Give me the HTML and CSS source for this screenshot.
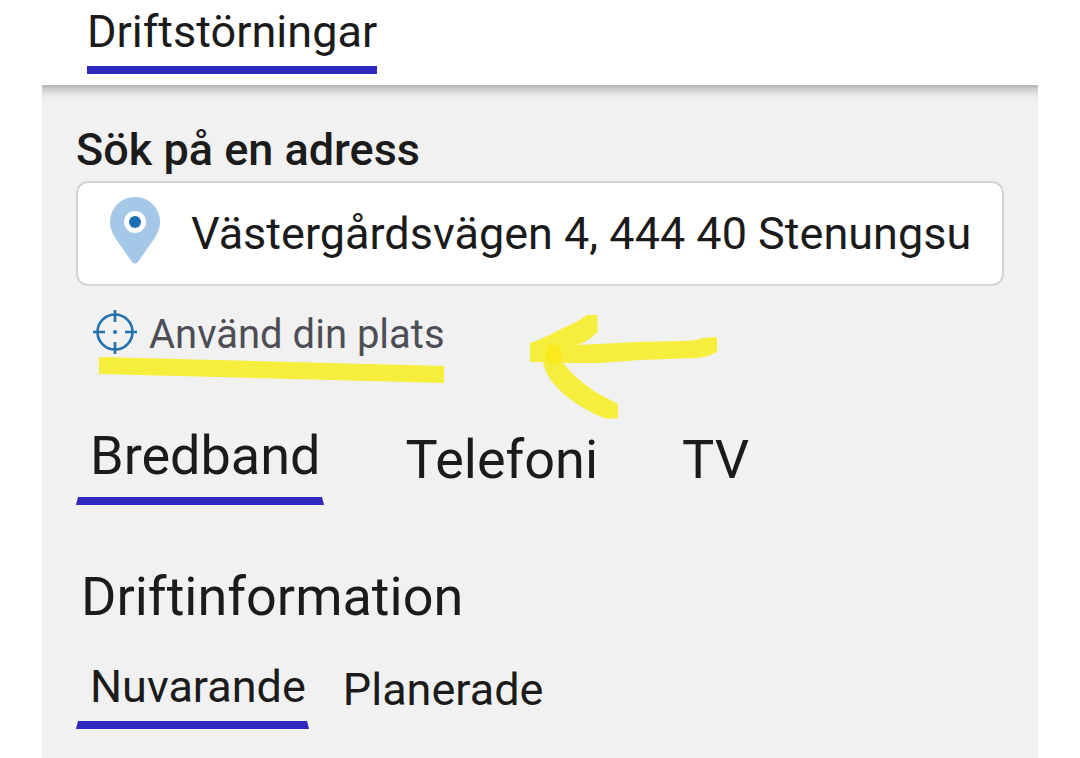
FILE: index.html
```html
<!DOCTYPE html>
<html lang="sv">
<head>
    <meta charset="UTF-8">
    <meta name="viewport" content="width=device-width, initial-scale=1.0">
    <title>Driftstörningar</title>
    <link rel="stylesheet" href="styles.css">
</head>
<body>
    <header class="topbar">
        <a class="topbar-link" href="#">Driftstörningar</a>
    </header>
    <main class="content">
        <label class="search-label" for="adress">Sök på en adress</label>
        <div class="search-box">
            <svg class="pin" viewBox="0 0 50 67" aria-hidden="true">
                <path d="M25 0C11 0 0 11 0 25c0 8 4 14 8 20l14 20q3 3 6 0l14-20c4-6 8-12 8-20C50 11 39 0 25 0z" fill="#a6c8e8"/>
                <circle cx="25" cy="25" r="11" fill="#fff"/>
                <circle cx="25" cy="25" r="6" fill="#1d6db5"/>
            </svg>
            <input class="search-input" id="adress" type="text" value="Västergårdsvägen 4, 444 40 Stenungsu">
        </div>

        <div class="location">
            <button class="location-button" type="button">
                <svg class="crosshair" viewBox="0 0 46 46" aria-hidden="true">
                    <circle cx="23" cy="23" r="17.500" fill="none" stroke="#2672ad" stroke-width="2.700"/>
                    <path d="M23 1v12M23 33v12M1 23h12M33 23h12" fill="none" stroke="#2672ad" stroke-width="2.700"/>
                    <circle cx="23" cy="23" r="2" fill="#2672ad"/>
                </svg>
                <span>Använd din plats</span>
            </button>
            <!-- Gul markering -->
            <svg class="marker" viewBox="0 0 650 120" aria-hidden="true">
                <path d="M23 48L368 57V74L23 65z" fill="#f6ee3c"/>
                <path d="M454 34Q462 32 471 27L489 18Q500 14 511 6H521L522 22Q514 32 501 36L561 33L607 32Q618 32 627 29L638 28Q641 28 641 31V43Q632 48 621 49L564 51L524 54H487Q493 62 501 69Q510 77 521 84L542 95V109L531 110Q515 104 501 95Q487 86 477 74Q469 64 467 53H454z" fill="#f6ee3c"/>
                <path d="M471 37Q476 34 484 38Q488 46 483 55Q476 56 469 52z" fill="#f8ea1c"/>
            </svg>
        </div>

        <nav class="tabs tabs-large">
            <button class="tab active" type="button">Bredband</button>
            <button class="tab" type="button">Telefoni</button>
            <button class="tab" type="button">TV</button>
        </nav>

        <h2 class="title">Driftinformation</h2>

        <nav class="tabs tabs-small">
            <button class="tab active" type="button">Nuvarande</button>
            <button class="tab" type="button">Planerade</button>
        </nav>
    </main>
</body>
</html>
```
FILE: styles.css
```css
* {
    box-sizing: border-box;
}
body {
    margin: 0;
    min-height: 100vh;
    display: flex;
    flex-direction: column;
    font-family: Roboto, sans-serif;
    font-size: 45px;
    line-height: 52px;
    color: #1b1b1b;
    background-color: #ffffff;
}
button, input {
    font: inherit;
    color: inherit;
    margin: 0;
    padding: 0;
    border: none;
    background: none;
}
button {
    cursor: pointer;
}
.topbar {
    display: flex;
    padding: 6px 87px 11px;
}
.topbar-link {
    padding-bottom: 8px;
    border-bottom: 8px solid #3029c0;
    color: inherit;
    text-decoration: none;
}
.content {
    flex: 1;
    margin: 0 42px;
    padding: 39px 34px 28px;
    background-color: #f1f1f1;
    box-shadow: inset 0 16px 14px -14px rgba(0, 0, 0, 0.4);
}
.search-label {
    display: block;
    font-weight: 500;
}
.search-box {
    display: flex;
    align-items: center;
    gap: 31px;
    height: 105px;
    margin-top: 5px;
    padding: 0 24px 0 32px;
    border: 2px solid #d4d4d4;
    border-radius: 12px;
    background-color: #ffffff;
}
.pin {
    flex: none;
    width: 50px;
    height: 67px;
    margin-bottom: 6px;
}
.search-input {
    flex: 1;
    min-width: 0;
    outline: none;
}
.location {
    position: relative;
    margin-top: 23px;
}
.location-button {
    display: flex;
    align-items: flex-start;
    gap: 11px;
    padding-left: 16px;
    font-size: 40px;
    color: #4d4d55;
}
.crosshair {
    width: 46px;
    height: 46px;
}
.marker {
    position: absolute;
    top: 0;
    left: 0;
    width: 650px;
    height: 120px;
    pointer-events: none;
}
.tabs {
    display: flex;
    align-items: center;
}
.tabs-large {
    gap: 80px;
    margin-top: 65px;
    font-size: 54px;
    line-height: 60px;
}
.tabs-small {
    gap: 32px;
    margin-top: 34px;
}
.tab {
    padding: 0 2px 12px;
}
/* Genomskinliga sidokanter gör strecket snett i ändarna */
.tab.active {
    padding: 0 1px 11px 12px;
    border: solid transparent;
    border-width: 0 2px 8px;
    border-bottom-color: #3029c0;
}
.tabs-small .tab {
    padding-bottom: 10px;
}
.tabs-small .tab.active {
    padding-bottom: 8px;
}
.title {
    margin: 62px 0 0 5px;
    font-size: 54px;
    font-weight: 400;
    line-height: 60px;
}
```
